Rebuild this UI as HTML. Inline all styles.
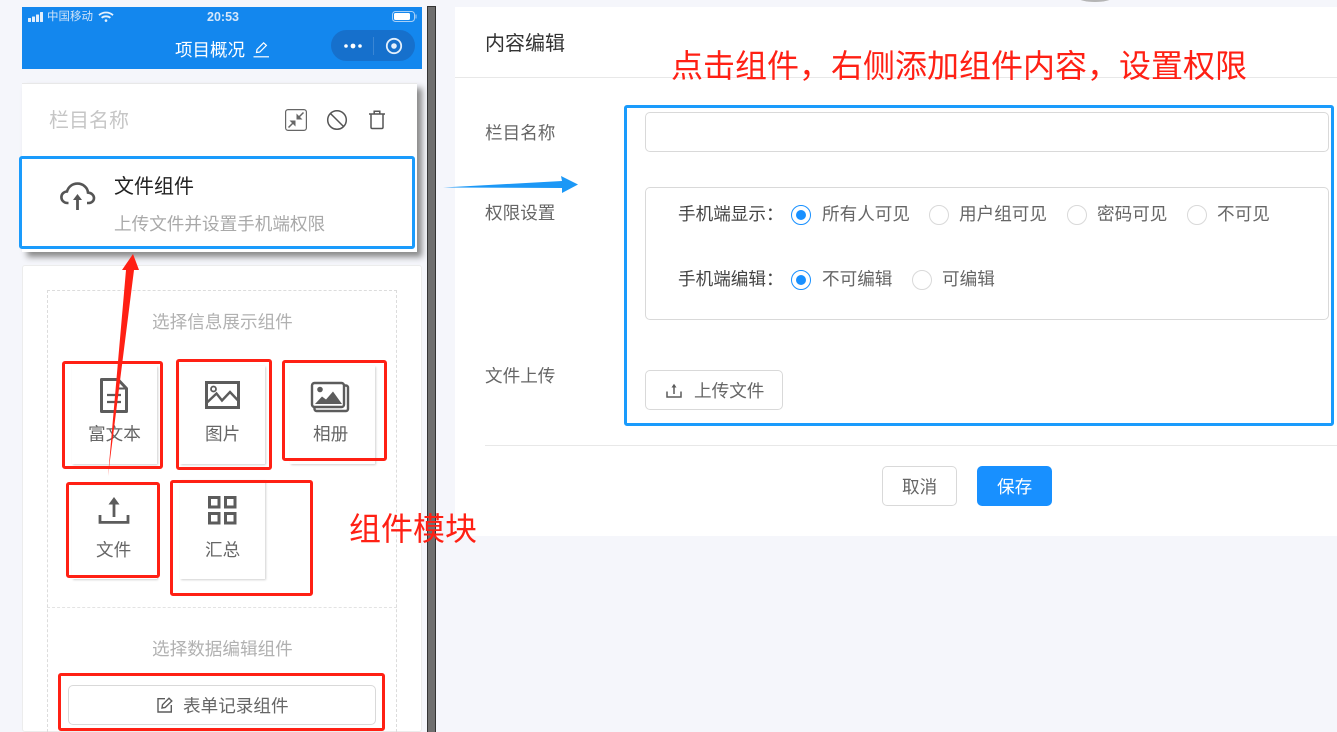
<!DOCTYPE html>
<html lang="zh">
<head>
<meta charset="utf-8">
<title>内容编辑</title>
<style>
html,body{margin:0;padding:0;width:1337px;height:732px;overflow:hidden;background:#f5f6fb;font-family:"Liberation Sans","Noto Sans CJK SC",sans-serif;}
div,span{position:absolute;box-sizing:border-box;}
.t{white-space:nowrap;line-height:24px;height:24px;font-size:17.6px;color:#666;}
.g{color:#b1b1b1;}
.bx{border:1px solid #d9d9d9;border-radius:5px;background:#fff;}
.tile{background:#fff;box-shadow:1px 1px 2px #d2d2d2;}
.red{border:3px solid #ff2014;border-radius:3px;}
.blue{border:3px solid #1a9bfc;border-radius:3px;}
.r{width:20px;height:20px;border-radius:50%;border:1px solid #d9d9d9;background:#fff;}
.r.on{border-color:#1890ff;}
.r.on:after{content:"";position:absolute;left:4px;top:4px;width:10px;height:10px;border-radius:50%;background:#1890ff;}
svg{position:absolute;overflow:visible;}
</style>
</head>
<body>
<!-- top arc -->
<div style="left:1077px;top:-8px;width:36px;height:10px;border-radius:50%;background:#b5b5b5;"></div>

<!-- phone header -->
<div style="left:22px;top:7px;width:400px;height:62px;background:#1387ee;"></div>
<svg style="left:27px;top:12px" width="18" height="10"><g fill="#e2effc"><rect x="1" y="6" width="3" height="4" rx=".5"/><rect x="5" y="4.5" width="3" height="5.5" rx=".5"/><rect x="9" y="2.5" width="3" height="7.5" rx=".5"/><rect x="13" y="0" width="3" height="10" rx=".5"/></g></svg>
<div class="t" style="left:47px;top:5px;font-size:11.5px;color:#cfe3f8;">中国移动</div>
<svg style="left:98px;top:11px" width="16" height="12" fill="none" stroke="#e6f1fd" stroke-width="1.8"><path d="M1 4.2C5 .6 11 .6 15 4.2M3.6 6.8C6 4.8 10 4.8 12.4 6.8"/><circle cx="8" cy="9.6" r="1.3" fill="#e6f1fd" stroke="none"/></svg>
<div class="t" style="left:207px;top:5px;font-size:12.5px;font-weight:bold;color:#d5e7fa;">20:53</div>
<svg style="left:392px;top:11px" width="26" height="12"><rect x=".5" y=".5" width="22" height="10" rx="3" fill="none" stroke="#a9d0f6"/><rect x="2" y="2" width="16" height="7" rx="1.5" fill="#fff"/><rect x="23.5" y="3.5" width="1" height="4" fill="#a9d0f6"/></svg>
<div class="t" style="left:175px;top:38px;font-size:17.5px;color:#fff;">项目概况</div>
<svg style="left:253px;top:41px" width="17" height="17" fill="none" stroke="#fff" stroke-width="1.2"><path d="M3.5 11.5 4 8.4 10.6 1.8 13.4 4.4 6.8 11.1Z"/><path d="M0.5 15.8H16"/></svg>
<div style="left:331px;top:30px;width:84px;height:31px;border-radius:16px;background:#1670cc;"></div>
<svg style="left:343px;top:38px" width="64" height="16"><circle cx="3" cy="8" r="1.8" fill="#fff"/><circle cx="10" cy="8" r="2.4" fill="#fff"/><circle cx="17" cy="8" r="1.8" fill="#fff"/><rect x="30" y="-1" width="1" height="18" fill="#3a86d4"/><circle cx="51" cy="8" r="7.2" fill="none" stroke="#e4f0fc" stroke-width="1.8"/><circle cx="51" cy="8" r="2.8" fill="#e4f0fc"/></svg>

<!-- divider -->
<div style="left:427px;top:6px;width:9px;height:726px;background:#6f6f6f;border-left:1px solid #333;border-right:1px solid #333;border-top:1px solid #333;"></div>

<!-- card 1 -->
<div style="left:22px;top:83px;width:395px;height:169px;background:#fff;border-top:1px solid #e8e8e8;box-shadow:5px 5px 6px #8a8a8a;"></div>
<div class="t" style="left:49px;top:109px;font-size:20px;color:#c6c6c6;">栏目名称</div>
<svg style="left:285px;top:109px" width="22" height="22" fill="none" stroke="#666" stroke-width="1.2"><rect x=".6" y=".6" width="20.8" height="20.8" rx="2.5"/><path d="M3.5 18.5 8.5 13.5M13.5 8.5 18.5 3.5" stroke-width="1.5"/><path d="M4.5 11.5H10.5V17.5ZM17.5 10.5H11.5V4.5Z" fill="#666" stroke="none"/></svg>
<svg style="left:327px;top:110px" width="20" height="20" fill="none" stroke="#555" stroke-width="1.5"><circle cx="10" cy="10" r="9.3"/><path d="M3.6 3.6 16.4 16.4"/></svg>
<svg style="left:368px;top:110px" width="18" height="20" fill="none" stroke="#555" stroke-width="1.5"><path d="M1 4H17M6.2 4V1.2H11.8V4M3 4V17.2Q3 18.5 4.3 18.5H13.7Q15 18.5 15 17.2V4"/></svg>
<div class="blue" style="left:19px;top:156px;width:396px;height:93px;background:#fff;"></div>
<svg style="left:60px;top:182px" width="36" height="29" fill="none" stroke="#555" stroke-width="2.6"><path d="M8.5 21H7.5C3.8 21 1.4 18.3 1.4 15.2 1.4 12 3.8 9.6 7 9.5 8.4 4.7 12.4 1.6 17.5 1.6 23 1.6 27.6 5.6 28 10.6 31.6 10.9 34 13.3 34 16 34 18.8 31.8 21 28.5 21H27"/><path d="M17.5 28V14" stroke-width="2.8"/><path d="M13 18 17.5 12 22 18H13Z" fill="#555" stroke="none"/></svg>
<div class="t" style="left:114px;top:175px;font-size:20px;color:#222;">文件组件</div>
<div class="t" style="left:114px;top:212px;color:#a9a9a9;">上传文件并设置手机端权限</div>

<!-- card 2 -->
<div style="left:22px;top:265px;width:400px;height:467px;background:#fff;border:1px solid #ececec;border-radius:3px;"></div>
<div style="left:47px;top:290px;width:350px;height:442px;border:1px dashed #dcdcdc;border-bottom:none;"></div>
<div style="left:47px;top:607px;width:350px;height:0;border-top:1px dashed #e3e3e3;"></div>
<div class="t g" style="left:152px;top:310px;">选择信息展示组件</div>
<div class="t g" style="left:152px;top:637px;">选择数据编辑组件</div>

<!-- tiles -->
<div class="tile" style="left:72px;top:366px;width:85px;height:98px;"></div>
<div class="tile" style="left:180px;top:366px;width:85px;height:98px;"></div>
<div class="tile" style="left:290px;top:366px;width:85px;height:98px;"></div>
<div class="tile" style="left:72px;top:486px;width:85px;height:93px;"></div>
<div class="tile" style="left:180px;top:480px;width:85px;height:99px;"></div>

<svg style="left:100px;top:378px" width="28" height="35" fill="none" stroke="#5c5c5c" stroke-width="3"><path d="M1.5 1.5H18L26.5 10.5V33.5H1.5Z" stroke-linejoin="round"/><path d="M18 1.5V10.5H26.5" stroke-width="2"/><path d="M7 17H21M7 24H21" stroke-width="2.2"/></svg>
<div class="t" style="left:88px;top:422px;">富文本</div>

<svg style="left:205px;top:381px" width="35" height="28" fill="none" stroke="#5c5c5c" stroke-width="3"><rect x="1.5" y="1.5" width="32" height="25"/><circle cx="8.5" cy="8" r="2.5" stroke-width="1.8"/><path d="M1.5 22 11.5 12.5 17 19.5 25 11 33.5 20" stroke-width="2.4"/></svg>
<div class="t" style="left:205px;top:422px;">图片</div>

<svg style="left:311px;top:382px" width="38" height="30"><rect x="3.5" y="3.5" width="33.5" height="25.5" rx="2" fill="none" stroke="#5c5c5c" stroke-width="2.4"/><rect x="1" y="1" width="32" height="24" rx="2.5" fill="#fff" stroke="#5c5c5c" stroke-width="2.4"/><circle cx="9" cy="7.5" r="2.8" fill="#5c5c5c"/><path d="M4 22 11 14.5 15 17.5 22 9.5 31 22Z" fill="#5c5c5c"/></svg>
<div class="t" style="left:313px;top:422px;">相册</div>

<svg style="left:98px;top:496px" width="32" height="29" fill="none" stroke="#5c5c5c" stroke-width="2.8"><path d="M2 19V26.4H30V19"/><path d="M16 21V7"/><path d="M10.5 8.5 16 1 21.5 8.5Z" fill="#5c5c5c" stroke="none"/></svg>
<div class="t" style="left:96px;top:538px;">文件</div>

<svg style="left:208px;top:496px" width="30" height="29" fill="none" stroke="#5c5c5c" stroke-width="3"><rect x="1.5" y="1.5" width="9.5" height="9.5"/><rect x="17.5" y="1.5" width="9.5" height="9.5"/><rect x="1.5" y="17.5" width="9.5" height="9.5"/><rect x="17.5" y="17.5" width="9.5" height="9.5"/></svg>
<div class="t" style="left:205px;top:538px;">汇总</div>

<!-- form component -->
<div class="bx" style="left:68px;top:685px;width:308px;height:40px;"></div>
<svg style="left:157px;top:697px" width="16" height="16" fill="none" stroke="#5c5c5c" stroke-width="1.4"><path d="M8 1.7H1V15H14.3V8"/><path d="M5 11 5.5 7.8 12 1.2 14.8 4 8.2 10.5Z"/></svg>
<div class="t" style="left:183px;top:694px;">表单记录组件</div>

<!-- right panel -->
<div style="left:455px;top:7px;width:882px;height:529px;background:#fff;"></div>
<div style="left:455px;top:77px;width:882px;height:1px;background:#e8e8e8;"></div>
<div class="t" style="left:485px;top:32px;font-size:20px;color:#333;">内容编辑</div>
<div class="t" style="left:485px;top:121px;">栏目名称</div>
<div class="t" style="left:485px;top:201px;">权限设置</div>
<div class="t" style="left:485px;top:364px;">文件上传</div>

<div class="bx" style="left:645px;top:112px;width:684px;height:40px;"></div>
<div class="bx" style="left:645px;top:187px;width:684px;height:133px;"></div>

<div class="t" style="left:678px;top:202px;color:#444;">手机端显示：</div>
<div class="r on" style="left:791px;top:205px;"></div>
<div class="t" style="left:822px;top:202px;">所有人可见</div>
<div class="r" style="left:929px;top:205px;"></div>
<div class="t" style="left:959px;top:202px;">用户组可见</div>
<div class="r" style="left:1067px;top:205px;"></div>
<div class="t" style="left:1097px;top:202px;">密码可见</div>
<div class="r" style="left:1187px;top:205px;"></div>
<div class="t" style="left:1217px;top:202px;">不可见</div>

<div class="t" style="left:678px;top:267px;color:#444;">手机端编辑：</div>
<div class="r on" style="left:791px;top:270px;"></div>
<div class="t" style="left:822px;top:267px;">不可编辑</div>
<div class="r" style="left:912px;top:270px;"></div>
<div class="t" style="left:942px;top:267px;">可编辑</div>

<div class="bx" style="left:645px;top:370px;width:138px;height:40px;"></div>
<svg style="left:666px;top:383px" width="16" height="15" fill="none" stroke="#5c5c5c" stroke-width="1.5"><path d="M1 8.5V14H15V8.5"/><path d="M8 11V3"/><path d="M5.5 4.5 8 .8 10.5 4.5Z" fill="#5c5c5c" stroke="none"/></svg>
<div class="t" style="left:694px;top:379px;">上传文件</div>

<div style="left:485px;top:445px;width:852px;height:1px;background:#e8e8e8;"></div>
<div class="bx" style="left:882px;top:466px;width:75px;height:40px;"></div>
<div class="t" style="left:902px;top:475px;">取消</div>
<div style="left:977px;top:466px;width:75px;height:40px;border-radius:5px;background:#1890ff;"></div>
<div class="t" style="left:997px;top:475px;color:#fff;">保存</div>

<!-- annotations -->
<div class="blue" style="left:624px;top:105px;width:710px;height:321px;"></div>
<div class="red" style="left:62px;top:361px;width:101px;height:108px;"></div>
<div class="red" style="left:176px;top:359px;width:96px;height:111px;"></div>
<div class="red" style="left:282px;top:360px;width:105px;height:101px;"></div>
<div class="red" style="left:66px;top:482px;width:94px;height:96px;"></div>
<div class="red" style="left:170px;top:480px;width:143px;height:116px;"></div>
<div class="red" style="left:58px;top:673px;width:327px;height:58px;"></div>

<svg style="left:0;top:0" width="1337" height="732">
<polygon points="108,476 126,270 122,270 133,254 139,270 134,270" fill="#ff2014"/>
<polygon points="443,187.5 562,181 561,176 578,184.5 562,193 562,188" fill="#1c98f6"/>
</svg>

<div class="t" style="left:671px;top:48px;height:36px;line-height:36px;font-size:32px;color:#ff2014;">点击组件，右侧添加组件内容，设置权限</div>
<div class="t" style="left:349px;top:511px;height:36px;line-height:36px;font-size:32px;color:#ff2014;">组件模块</div>
</body>
</html>
